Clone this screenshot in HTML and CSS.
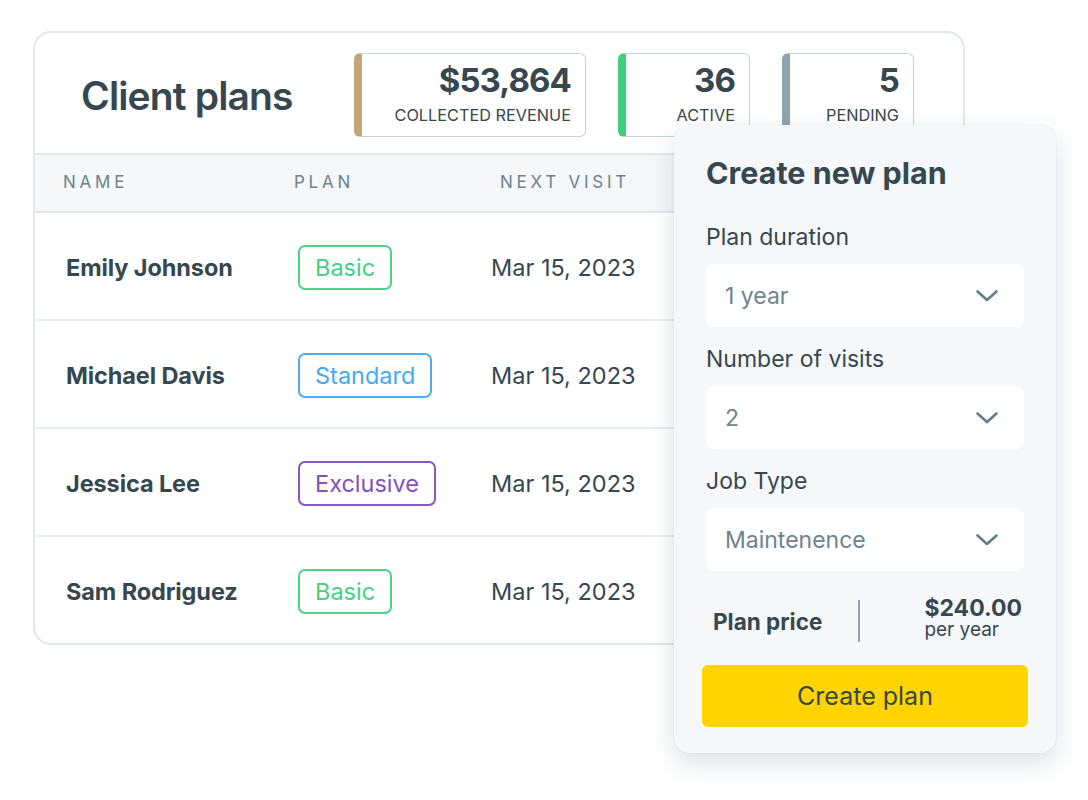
FILE: index.html
```html
<!DOCTYPE html>
<html lang="en">
<head>
<meta charset="utf-8">
<title>Client plans</title>
<link rel="stylesheet" href="styles.css">
</head>
<body>
<div class="stage">
  <section class="card">
    <header class="card-head">
      <h1 class="title">Client plans</h1>
      <div class="stats">
        <div class="stat stat-revenue">
          <div class="stat-value">$53,864</div>
          <div class="stat-label">COLLECTED REVENUE</div>
        </div>
        <div class="stat stat-active">
          <div class="stat-value">36</div>
          <div class="stat-label">ACTIVE</div>
        </div>
        <div class="stat stat-pending">
          <div class="stat-value">5</div>
          <div class="stat-label">PENDING</div>
        </div>
      </div>
    </header>
    <div class="thead">
      <div class="th th-name">NAME</div>
      <div class="th th-plan">PLAN</div>
      <div class="th th-date">NEXT VISIT</div>
    </div>
    <div class="row">
      <div class="cell-name">Emily Johnson</div>
      <div class="cell-plan"><span class="badge badge-basic">Basic</span></div>
      <div class="cell-date">Mar 15, 2023</div>
    </div>
    <div class="row">
      <div class="cell-name">Michael Davis</div>
      <div class="cell-plan"><span class="badge badge-standard">Standard</span></div>
      <div class="cell-date">Mar 15, 2023</div>
    </div>
    <div class="row">
      <div class="cell-name">Jessica Lee</div>
      <div class="cell-plan"><span class="badge badge-exclusive">Exclusive</span></div>
      <div class="cell-date">Mar 15, 2023</div>
    </div>
    <div class="row">
      <div class="cell-name">Sam Rodriguez</div>
      <div class="cell-plan"><span class="badge badge-basic">Basic</span></div>
      <div class="cell-date">Mar 15, 2023</div>
    </div>
  </section>

  <aside class="panel">
    <h2 class="panel-title">Create new plan</h2>
    <label class="field-label">Plan duration</label>
    <div class="select"><span>1 year</span>
      <svg class="chev" width="22" height="12" viewBox="0 0 22 12"><path d="M1.5 1.5 L11 10 L20.5 1.5" fill="none" stroke="#607d8b" stroke-width="2.6" stroke-linecap="round" stroke-linejoin="round"/></svg>
    </div>
    <label class="field-label">Number of visits</label>
    <div class="select"><span>2</span>
      <svg class="chev" width="22" height="12" viewBox="0 0 22 12"><path d="M1.5 1.5 L11 10 L20.5 1.5" fill="none" stroke="#607d8b" stroke-width="2.6" stroke-linecap="round" stroke-linejoin="round"/></svg>
    </div>
    <label class="field-label">Job Type</label>
    <div class="select"><span>Maintenence</span>
      <svg class="chev" width="22" height="12" viewBox="0 0 22 12"><path d="M1.5 1.5 L11 10 L20.5 1.5" fill="none" stroke="#607d8b" stroke-width="2.6" stroke-linecap="round" stroke-linejoin="round"/></svg>
    </div>
    <div class="price-row">
      <div class="price-label">Plan price</div>
      <div class="price-divider"></div>
      <div class="price-value">
        <div class="price-amount">$240.00</div>
        <div class="price-period">per year</div>
      </div>
    </div>
    <button class="create-btn">Create plan</button>
  </aside>
</div>
</body>
</html>
```

FILE: styles.css
```css
* { box-sizing: border-box; }

html, body {
  margin: 0;
  padding: 0;
  background: #ffffff;
}

body {
  font-family: Inter, "Noto Sans", "Liberation Sans", sans-serif;
  color: #37474f;
  width: 1088px;
  height: 800px;
  overflow: hidden;
}

.stage {
  position: relative;
  padding: 31px 0 0 33px;
}

.card {
  width: 932px;
  border: 2px solid #e3e8eb;
  border-radius: 18px;
  background: #fff;
  overflow: hidden;
}

.card-head {
  height: 122px;
  border-bottom: 2px solid #e3e8eb;
  display: flex;
  align-items: flex-start;
  padding: 20px 49px 0 46px;
}

.title {
  margin: 0;
  margin-top: 18px;
  font-size: 39px;
  line-height: 50px;
  font-weight: 600;
  letter-spacing: -0.85px;
  color: #37474f;
}

.stats {
  margin-left: auto;
  display: flex;
  gap: 32px;
}

.stat {
  height: 84px;
  border: 1px solid #cbd4d9;
  border-left-width: 8px;
  border-radius: 6px;
  padding: 7px 14px 0 0;
  text-align: right;
  background: #fff;
}

.stat-revenue { width: 232px; border-left-color: #c1a779; }
.stat-active { width: 132px; border-left-color: #3ecf7c; }
.stat-pending { width: 132px; border-left-color: #90a4ae; }

.stat-value {
  font-size: 33px;
  line-height: 38px;
  font-weight: 700;
  letter-spacing: -0.9px;
  color: #37474f;
}

.stat-label {
  margin-top: 6px;
  font-size: 16.3px;
  line-height: 20px;
  color: #37474f;
}

.thead {
  height: 58px;
  background: #f5f7f9;
  border-bottom: 2px solid #e3e8eb;
  display: grid;
  grid-template-columns: 259px 206px 200px;
  align-items: center;
  padding-bottom: 2px;
}

.th {
  font-size: 17px;
  letter-spacing: 3.75px;
  color: #6e838d;
}

.th-name { padding-left: 28px; }

.row {
  height: 108px;
  border-bottom: 2px solid #e9edef;
  display: grid;
  grid-template-columns: 263px 193px 200px;
  align-items: center;
  padding-top: 3px;
}

.row:last-child { border-bottom: 0; height: 106px; }

.cell-name {
  padding-left: 31px;
  font-size: 23.5px;
  font-weight: 700;
  color: #37474f;
  letter-spacing: -0.1px;
}

.cell-date {
  font-size: 23.5px;
  color: #37474f;
}

.badge {
  display: inline-flex;
  align-items: center;
  height: 45px;
  padding: 0 15px;
  border: 2px solid;
  border-radius: 7px;
  font-size: 23.5px;
}

.badge-basic { color: #45d084; border-color: #4cd38a; }
.badge-standard { color: #44a9ee; border-color: #4cadf0; }
.badge-exclusive { color: #8650bd; border-color: #8a56c0; }

.panel {
  position: absolute;
  left: 674px;
  top: 125px;
  width: 382px;
  height: 628px;
  background: #f5f7f9;
  border-radius: 16px;
  box-shadow: 0 10px 24px rgba(40, 60, 80, 0.16), 0 0 2px rgba(40, 60, 80, 0.08);
  padding: 30px 32px 0 32px;
}

.panel-title {
  margin: 0;
  font-size: 30.5px;
  line-height: 36px;
  font-weight: 700;
  color: #37474f;
  letter-spacing: 0;
}

.field-label {
  display: block;
  font-size: 23px;
  line-height: 28px;
  color: #37474f;
  margin-top: 18px;
  margin-bottom: 13px;
}

.panel-title + .field-label { margin-top: 32px; }

.select {
  height: 63px;
  background: #fff;
  border-radius: 8px;
  display: flex;
  align-items: center;
  justify-content: space-between;
  padding: 0 26px 0 19px;
  font-size: 23px;
  color: #6e838d;
}

.chev { display: block; }

.price-row {
  display: flex;
  align-items: center;
  margin-top: 29px;
  padding: 0 2px 0 7px;
  height: 42px;
}

.price-label {
  width: 145px;
  font-size: 22.5px;
  font-weight: 700;
  color: #37474f;
}

.price-divider {
  width: 2px;
  height: 42px;
  background: #90a4ae;
}

.price-value {
  margin-left: auto;
  margin-top: -6px;
}

.price-amount {
  font-size: 23px;
  line-height: 24px;
  font-weight: 700;
  color: #37474f;
}

.price-period {
  font-size: 19px;
  line-height: 20px;
  color: #37474f;
}

.create-btn {
  display: block;
  width: 326px;
  height: 62px;
  margin: 23px 0 0 -4px;
  border: 0;
  border-radius: 6px;
  background: #ffd400;
  font-family: Inter, "Noto Sans", "Liberation Sans", sans-serif;
  font-size: 25px;
  color: #37474f;
  cursor: pointer;
}
```
